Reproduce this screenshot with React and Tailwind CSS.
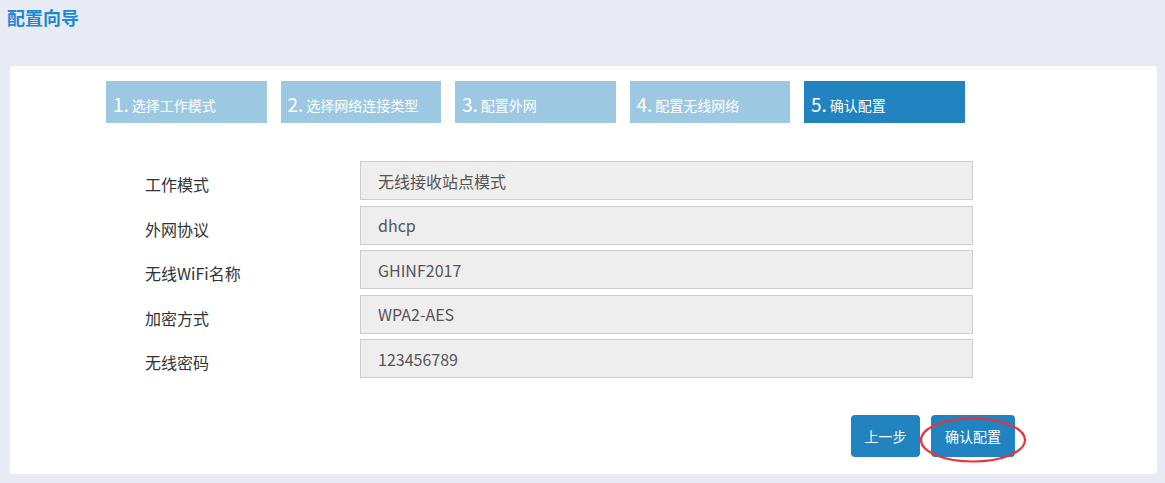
import React from 'react';

const steps = [
    { num: '1.', label: '选择工作模式' },
    { num: '2.', label: '选择网络连接类型' },
    { num: '3.', label: '配置外网' },
    { num: '4.', label: '配置无线网络' },
    { num: '5.', label: '确认配置' },
];

const rows = [
    { label: '工作模式', value: '无线接收站点模式' },
    { label: '外网协议', value: 'dhcp' },
    { label: '无线WiFi名称', value: 'GHINF2017' },
    { label: '加密方式', value: 'WPA2-AES' },
    { label: '无线密码', value: '123456789' },
];

const font = { fontFamily: '"Microsoft YaHei", "Noto Sans CJK SC", "Noto Sans", sans-serif' };

const App = () => {
    const current = 5;

    return (
        <div className="w-[1165px] h-[483px] bg-[#e8ebf3] overflow-hidden" style={font}>
            {/* page title */}
            <div className="h-[66px] pl-[7px] pt-[4px]">
                <h1 className="text-[18px] font-bold leading-[26px] text-[#1a8ad4]">配置向导</h1>
            </div>

            <div className="ml-[10px] mr-[8px] h-[408px] bg-white rounded-[4px] pt-[15px] pl-[96px]">
                {/* wizard steps */}
                <div className="flex gap-[14px]">
                    {steps.map((s, i) => (
                        <div
                            key={s.num}
                            className={`w-[160.5px] h-[42px] flex items-center pl-[7px] pt-[3px] text-white ${
                                i + 1 === current ? 'bg-[#2184c0]' : 'bg-[#9dc8e2]'
                            }`}
                        >
                            <span className="text-[19px] leading-none mr-[3px]">{s.num}</span>
                            <span className="text-[14px] leading-none pt-[2px]">{s.label}</span>
                        </div>
                    ))}
                </div>

                {/* summary */}
                <div className="mt-[38px] pl-[39px] flex flex-col gap-[5.5px]">
                    {rows.map(r => (
                        <div key={r.label} className="flex items-center h-[39px]">
                            <div className="w-[215px] text-[16px] text-[#333] pt-[7px]">{r.label}</div>
                            <div className="w-[613px] h-[39px] bg-[#eeeeee] border border-[#cccccc] flex items-center pl-[17px] text-[16px] text-[#555]">
                                {r.value}
                            </div>
                        </div>
                    ))}
                </div>

                {/* actions */}
                <div className="mt-[37px] flex justify-end gap-[11px] w-[909px]">
                    <button className="w-[69px] h-[42px] bg-[#2184c0] rounded-[4px] text-white text-[14px]">上一步</button>
                    <div className="relative">
                        <button className="w-[84px] h-[42px] bg-[#2184c0] rounded-[4px] text-white text-[14px]">确认配置</button>
                        <svg className="absolute left-[-12px] top-[1px] pointer-events-none" width="108" height="48" viewBox="0 0 108 48">
                            <ellipse cx="54" cy="24" rx="52" ry="21.5" fill="none" stroke="#e8333a" strokeWidth="2.2" />
                        </svg>
                    </div>
                </div>
            </div>
        </div>
    );
};

export default App;
